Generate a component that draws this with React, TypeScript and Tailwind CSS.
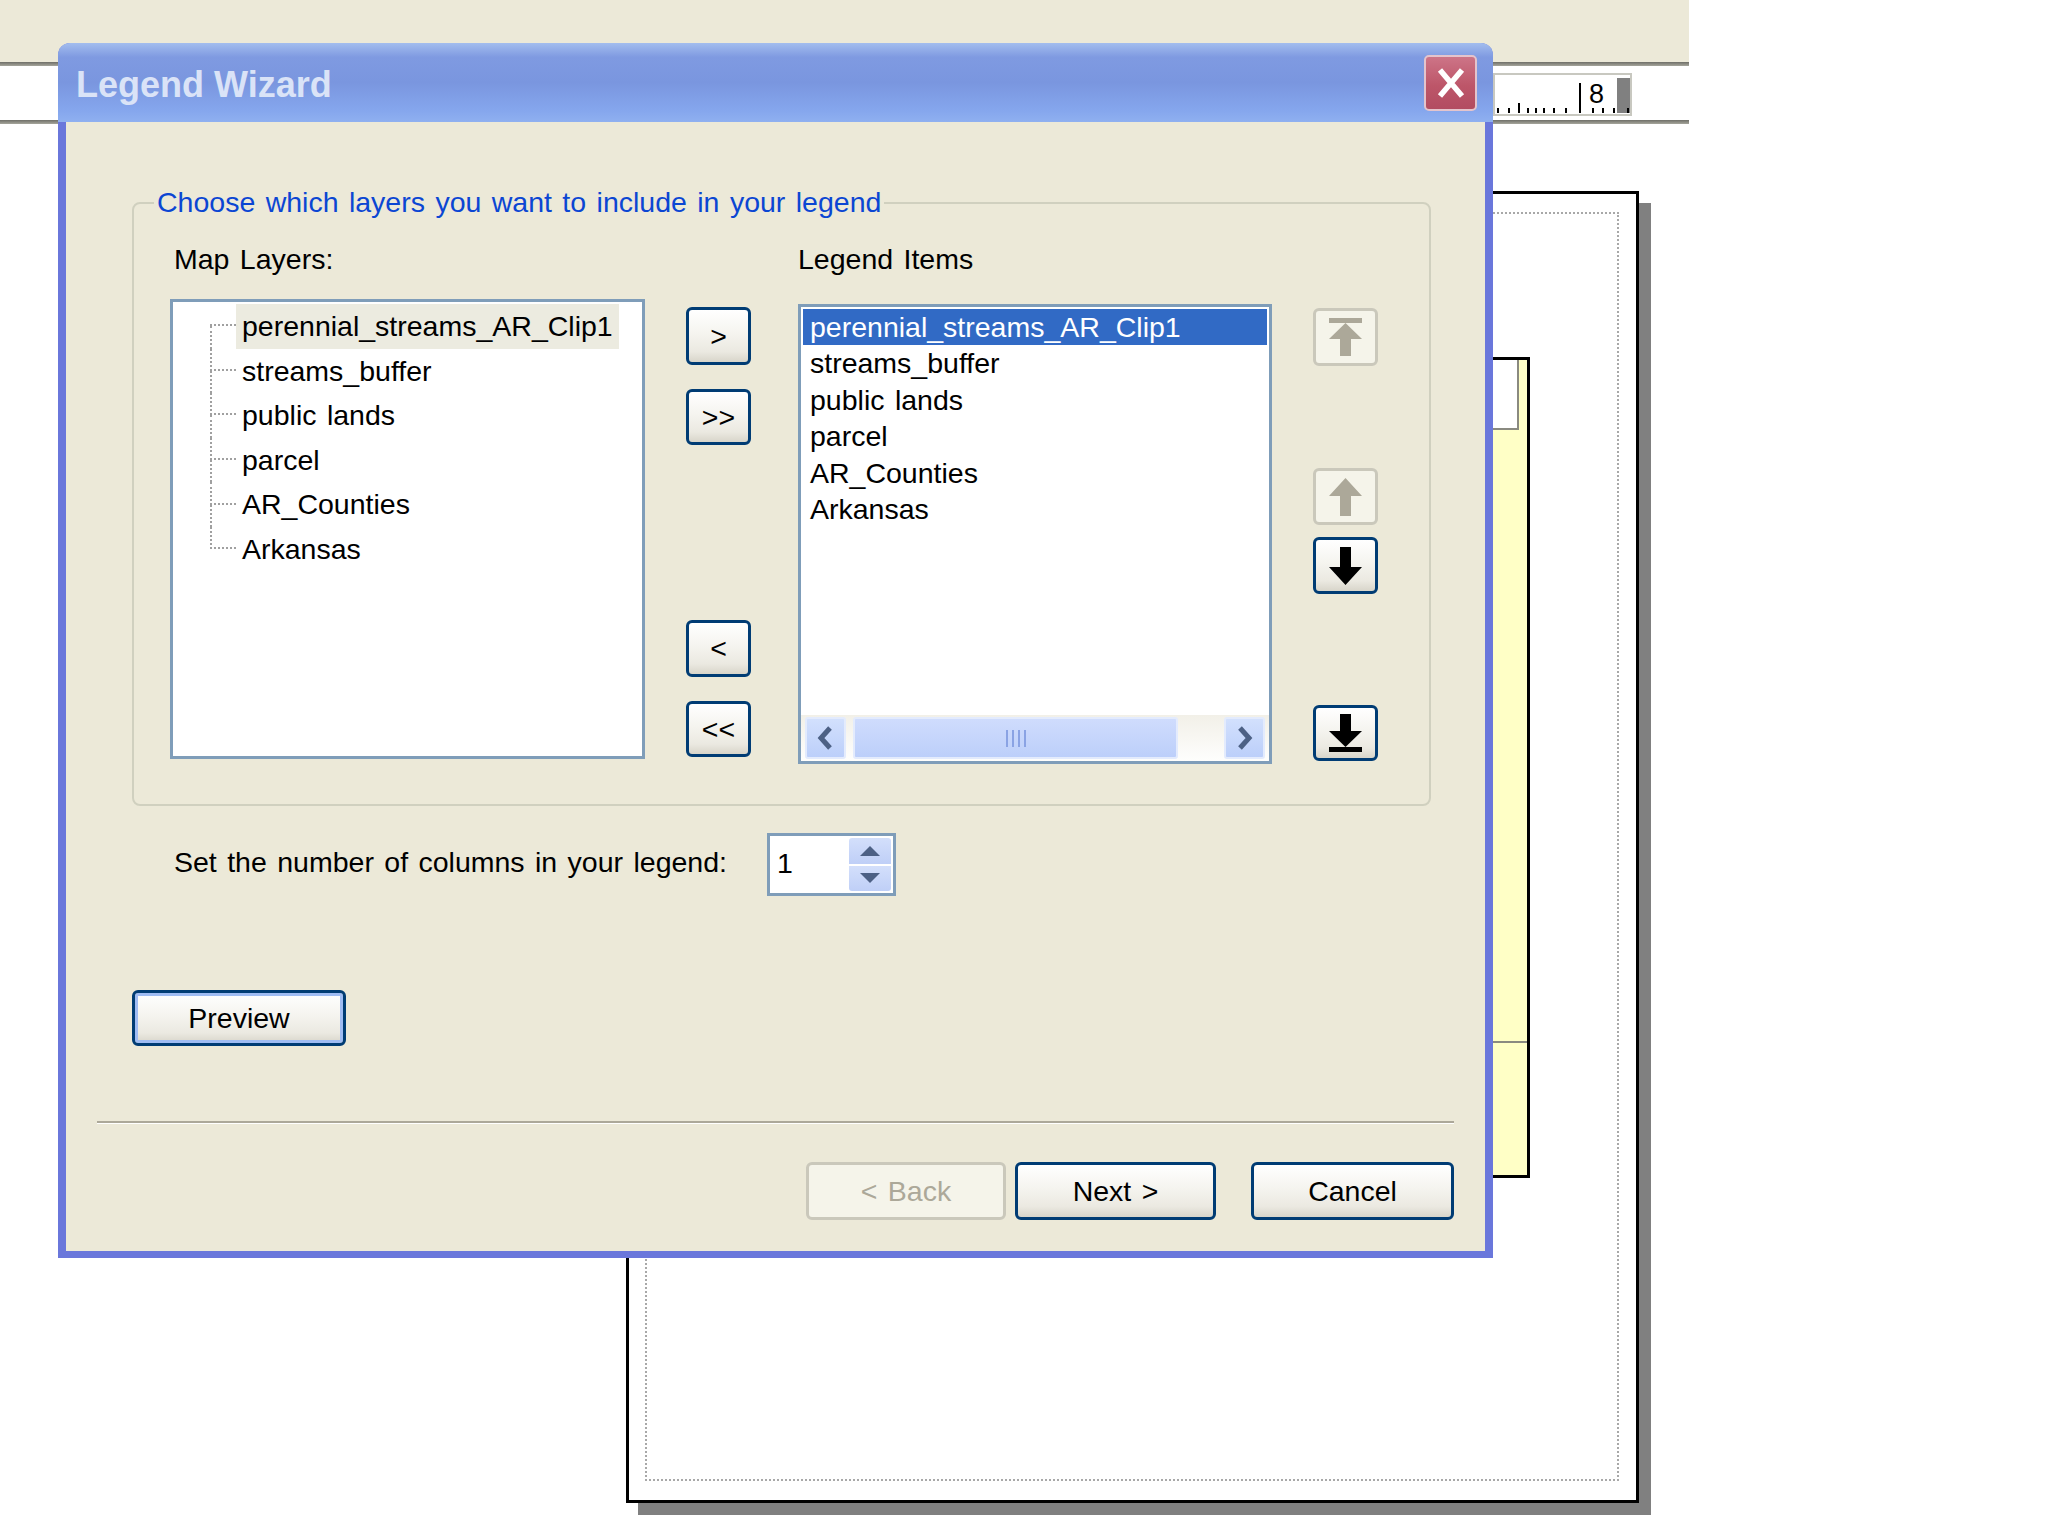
import React from "react";

const btnBase =
  "flex items-center justify-center rounded-[6px] border-[3px] text-[28.5px] leading-none";
const btnOn =
  "border-[#003c74] bg-[linear-gradient(180deg,#ffffff_0%,#f5f4ef_45%,#ebe9e1_80%,#d8d5ca_100%)] text-black";
const btnOff = "border-[#cac8bb] bg-[#f5f4ea] text-[#aca899]";

function XpButton({
  className,
  disabled,
  focused,
  children,
}: {
  className: string;
  disabled?: boolean;
  focused?: boolean;
  children: React.ReactNode;
}) {
  return (
    <div
      className={`${btnBase} ${disabled ? btnOff : btnOn} ${className} ${
        focused ? "shadow-[inset_0_0_0_3px_#9fbcf3]" : ""
      }`}
    >
      {children}
    </div>
  );
}

function ArrowIcon({ dir, bar, color }: { dir: "up" | "down"; bar?: boolean; color: string }) {
  // drawn pointing up, flipped for down
  return (
    <svg width="33" height="38" viewBox="0 0 33 38" className={dir === "down" ? "rotate-180" : ""}>
      {bar && <rect x="0" y="0" width="33" height="5" fill={color} />}
      <polygon
        points={
          bar
            ? "16.5,5 33,21 22,21 22,38 11,38 11,21 0,21"
            : "16.5,0 33,18 22,18 22,38 11,38 11,18 0,18"
        }
        fill={color}
      />
    </svg>
  );
}

function Chevron({ dir }: { dir: "left" | "right" }) {
  return (
    <svg width="19" height="24" viewBox="0 0 19 24">
      <path
        d={dir === "left" ? "M14 2 L5 12 L14 22" : "M5 2 L14 12 L5 22"}
        stroke="#4d6185"
        strokeWidth="5"
        fill="none"
      />
    </svg>
  );
}

function Ruler() {
  const small = [4, 15, 34, 42, 50, 60, 72, 99, 109, 120, 134];
  return (
    <svg width="139" height="43" viewBox="0 0 139 43" className="ml-[1493px] mt-[7px]">
      <rect x="1" y="1" width="137" height="41" fill="#ffffff" stroke="#c8c8c0" strokeWidth="2" />
      <rect x="124" y="5" width="13" height="35" fill="#808080" />
      {small.map((x) => (
        <rect key={x} x={x} y="35" width="2" height="5" fill="#000" />
      ))}
      <rect x="25" y="30" width="2" height="10" fill="#000" />
      <rect x="86" y="10" width="2" height="30" fill="#000" />
      <text x="96" y="30" fontSize="27" fontFamily="Liberation Sans, Arial, sans-serif" fill="#000">
        8
      </text>
    </svg>
  );
}

const mapLayers = [
  "perennial_streams_AR_Clip1",
  "streams_buffer",
  "public lands",
  "parcel",
  "AR_Counties",
  "Arkansas",
];

function TreeList() {
  return (
    <div className="mt-[22px] h-[460px] border-[3px] border-[#7f9db9] bg-white pt-[2px]">
      {mapLayers.map((name, i) => (
        <div key={name} className="flex h-[44.6px]">
          <div className="ml-[37px] flex w-[26px] flex-col">
            <div
              className={`h-1/2 border-b-2 border-dotted border-b-[#a0a0a0] ${
                i === 0 ? "" : "border-l-2 border-l-[#a0a0a0]"
              }`}
            />
            <div
              className={`h-1/2 ${
                i === mapLayers.length - 1 ? "" : "border-l-2 border-dotted border-l-[#a0a0a0]"
              }`}
            />
          </div>
          <div
            className={`px-[6px] text-[28.5px] leading-[44.6px] ${i === 0 ? "bg-[#ecebe0]" : ""}`}
          >
            {name}
          </div>
        </div>
      ))}
    </div>
  );
}

function LegendList() {
  return (
    <div className="mt-[27px] flex h-[460px] flex-col border-[3px] border-[#7f9db9] bg-white">
      <div className="flex-1 px-[2px] pt-[2px]">
        {mapLayers.map((name, i) => (
          <div
            key={name}
            className={`h-[36.4px] pl-[7px] text-[28.5px] leading-[37px] ${
              i === 0 ? "bg-[#316ac5] text-white" : ""
            }`}
          >
            {name}
          </div>
        ))}
      </div>
      <div className="flex h-[46px] items-center bg-[linear-gradient(180deg,#f2f0e8,#fefefd)] px-[4px]">
        <div className="flex h-[42px] w-[41px] items-center justify-center rounded-[3px] border-2 border-[#e3ebfd] bg-[linear-gradient(180deg,#d2e0fd,#bccffa)]">
          <Chevron dir="left" />
        </div>
        <div className="ml-[7px] flex h-[42px] w-[325px] items-center justify-center gap-[4px] rounded-[3px] border-2 border-[#e3ebfd] bg-[linear-gradient(180deg,#cfdcfd,#bccffa)]">
          <span className="h-[17px] w-[2px] bg-[#8aa3e4]" />
          <span className="h-[17px] w-[2px] bg-[#8aa3e4]" />
          <span className="h-[17px] w-[2px] bg-[#8aa3e4]" />
          <span className="h-[17px] w-[2px] bg-[#8aa3e4]" />
        </div>
        <div className="flex-1" />
        <div className="flex h-[42px] w-[41px] items-center justify-center rounded-[3px] border-2 border-[#e3ebfd] bg-[linear-gradient(180deg,#d2e0fd,#bccffa)]">
          <Chevron dir="right" />
        </div>
      </div>
    </div>
  );
}

function Spinner() {
  return (
    <div className="flex h-[63px] w-[129px] border-[3px] border-[#7f9db9] bg-white">
      <div className="flex-1 pl-[7px] text-[28.5px] leading-[55px]">1</div>
      <div className="my-[2px] mr-[2px] flex w-[42px] flex-col gap-[2px]">
        <div className="flex flex-1 items-center justify-center rounded-t-[3px] bg-[linear-gradient(180deg,#d3dffb,#bfcff7)]">
          <svg width="20" height="10" viewBox="0 0 20 10">
            <polygon points="10,0 20,10 0,10" fill="#4d6185" />
          </svg>
        </div>
        <div className="flex flex-1 items-center justify-center rounded-b-[3px] bg-[linear-gradient(180deg,#d3dffb,#bfcff7)]">
          <svg width="20" height="10" viewBox="0 0 20 10">
            <polygon points="0,0 20,0 10,10" fill="#4d6185" />
          </svg>
        </div>
      </div>
    </div>
  );
}

function LegendWizard() {
  return (
    <div className="absolute left-[58px] top-[43px] flex h-[1215px] w-[1435px] flex-col rounded-t-[12px] bg-[#6a77db]">
      {/* title bar */}
      <div className="flex h-[79px] items-center rounded-t-[12px] bg-[linear-gradient(180deg,#a3bdee_0%,#7f9ae1_18%,#7a96df_50%,#85a6ed_85%,#8fb0f0_100%)] pl-[18px] pr-[16px]">
        <div className="flex-1 pt-[4px] text-[36px] font-bold text-[#dae3f7] [word-spacing:0px]">
          Legend Wizard
        </div>
        <div className="flex h-[56px] w-[53px] items-center justify-center rounded-[5px] border-2 border-[#e4c4cc] bg-[linear-gradient(180deg,#cd7487,#bd5669_55%,#b24c61)]">
          <svg width="28" height="32" viewBox="0 0 28 32">
            <path d="M3 3 L25 29 M25 3 L3 29" stroke="#ffffff" strokeWidth="5.5" fill="none" />
          </svg>
        </div>
      </div>

      {/* body */}
      <div className="mx-[8px] mb-[7px] flex flex-1 flex-col bg-[#ece9d8] px-[31px]">
        <div className="ml-[35px] mr-[23px] mt-[80px] rounded-[8px] border-2 border-[#d0d0bf]">
          <div className="-mt-[20px] ml-[20px] w-fit bg-[#ece9d8] px-[3px] text-[28.5px] leading-[36px] text-[#0b46d3]">
            Choose which layers you want to include in your legend
          </div>
          <div className="flex pb-[40px] pl-[36px] pt-[21px]">
            <div className="w-[475px]">
              <div className="pl-[4px] text-[28.5px] leading-[36px]">Map Layers:</div>
              <TreeList />
            </div>

            <div className="ml-[41px] flex w-[65px] flex-col pt-[66px]">
              <XpButton className="h-[58px]">&gt;</XpButton>
              <XpButton className="mt-[24px] h-[56px]">&gt;&gt;</XpButton>
              <XpButton className="mt-[175px] h-[57px]">&lt;</XpButton>
              <XpButton className="mt-[24px] h-[56px]">&lt;&lt;</XpButton>
            </div>

            <div className="ml-[47px] w-[474px]">
              <div className="text-[28.5px] leading-[36px]">Legend Items</div>
              <LegendList />
            </div>

            <div className="ml-[41px] flex w-[65px] flex-col pt-[67px]">
              <XpButton disabled className="h-[58px]">
                <ArrowIcon dir="up" bar color="#aca899" />
              </XpButton>
              <XpButton disabled className="mt-[102px] h-[57px]">
                <ArrowIcon dir="up" color="#aca899" />
              </XpButton>
              <XpButton className="mt-[12px] h-[57px]">
                <ArrowIcon dir="down" color="#000000" />
              </XpButton>
              <XpButton className="mt-[111px] h-[56px]">
                <ArrowIcon dir="down" bar color="#000000" />
              </XpButton>
            </div>
          </div>
        </div>

        <div className="ml-[77px] mt-[27px] flex items-center">
          <div className="mb-[6px] w-[593px] text-[28.5px] leading-[36px]">
            Set the number of columns in your legend:
          </div>
          <Spinner />
        </div>

        <XpButton focused className="ml-[35px] mt-[94px] h-[56px] w-[214px]">
          Preview
        </XpButton>

        <div className="mt-[75px] h-[3px] border-b border-t-2 border-b-white border-t-[#aca899]" />

        <div className="mt-[38px] flex justify-end">
          <XpButton disabled className="h-[58px] w-[200px]">
            &lt; Back
          </XpButton>
          <XpButton className="ml-[9px] h-[58px] w-[201px]">Next &gt;</XpButton>
          <XpButton className="ml-[35px] h-[58px] w-[203px]">Cancel</XpButton>
        </div>
      </div>
    </div>
  );
}

export default function App() {
  return (
    <div className="relative h-[1536px] w-[2048px] overflow-hidden bg-white font-['Liberation_Sans',Arial,sans-serif] text-black [word-spacing:2.5px]">
      {/* toolbar and ruler strip of the host application */}
      <div className="h-[62px] w-[1689px] bg-[#ece9d8]" />
      <div className="h-[4px] w-[1689px] bg-[linear-gradient(180deg,#6f6f68,#a6a69c)]" />
      <div className="flex h-[54px] w-[1689px]">
        <Ruler />
      </div>
      <div className="h-[4px] w-[1689px] bg-[linear-gradient(180deg,#6f6f68,#a6a69c)]" />

      {/* layout page */}
      <div className="absolute left-[626px] top-[191px] h-[1312px] w-[1013px] border-[3px] border-black bg-white pb-[19px] pl-[16px] pr-[17px] pt-[18px] shadow-[12px_12px_0_#808080]">
        <div className="h-full border-2 border-dotted border-[#a8a8a8]" />
      </div>

      {/* legend frame on the page */}
      <div className="absolute left-[1420px] top-[357px] flex h-[821px] w-[110px] flex-col border-[3px] border-black bg-[#ffffc6]">
        <div className="ml-[40px] mr-[8px] h-[70px] border-2 border-t-0 border-[#8a8a80] bg-white" />
        <div className="mt-[611px] h-[2px] bg-[#8a8a80]" />
      </div>

      <LegendWizard />
    </div>
  );
}
